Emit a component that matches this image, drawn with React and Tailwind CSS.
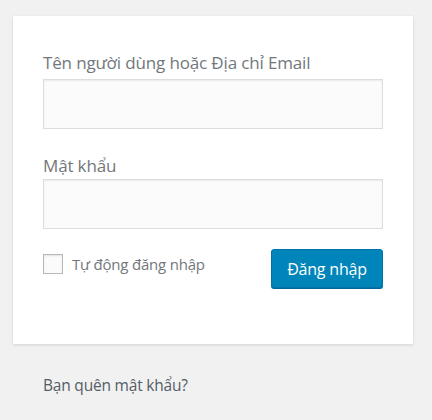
export default function App() {
  return (
    <div className="min-h-screen bg-[#f1f1f1] pt-4 pl-[13px] font-['Open_Sans',sans-serif]">
      <form className="w-[400px] h-[328px] bg-white shadow-[0_1px_3px_rgba(0,0,0,0.13)] px-[30px] pt-[34px]">
        <label className="block text-[17px] leading-[26px] text-[#72777c] tracking-[-0.15px]">
          Tên người dùng hoặc Địa chỉ Email
        </label>
        <input
          type="text"
          className="block w-[340px] h-[50px] mt-[3px] bg-[#fbfbfb] border border-[#ddd] shadow-[inset_0_1px_2px_rgba(0,0,0,0.07)] outline-none"
        />
        <label className="block mt-[24px] text-[17px] leading-[26px] text-[#72777c] tracking-[-0.15px]">
          Mật khẩu
        </label>
        <input
          type="password"
          className="block w-[340px] h-[50px] bg-[#fbfbfb] border border-[#ddd] shadow-[inset_0_1px_2px_rgba(0,0,0,0.07)] outline-none"
        />
        <div className="flex items-start justify-between mt-[20px]">
          <label className="flex items-center gap-[9px] mt-[4px] text-[15px] text-[#72777c] tracking-[-0.2px]">
            <span className="w-5 h-5 bg-[#fbfbfb] border border-[#b4b9be] shadow-[inset_0_1px_2px_rgba(0,0,0,0.1)]"></span>
            Tự động đăng nhập
          </label>
          <button
            type="button"
            className="w-[112px] h-[39px] rounded-[3px] bg-[#0085ba] border border-[#0073aa] shadow-[0_1px_0_#006799] text-white text-[16px] tracking-[-0.2px]"
          >
            Đăng nhập
          </button>
        </div>
      </form>
      <p className="ml-[30px] mt-[30px] text-[15.5px] text-[#555d66] tracking-[-0.2px]">
        Bạn quên mật khẩu?
      </p>
    </div>
  );
}
